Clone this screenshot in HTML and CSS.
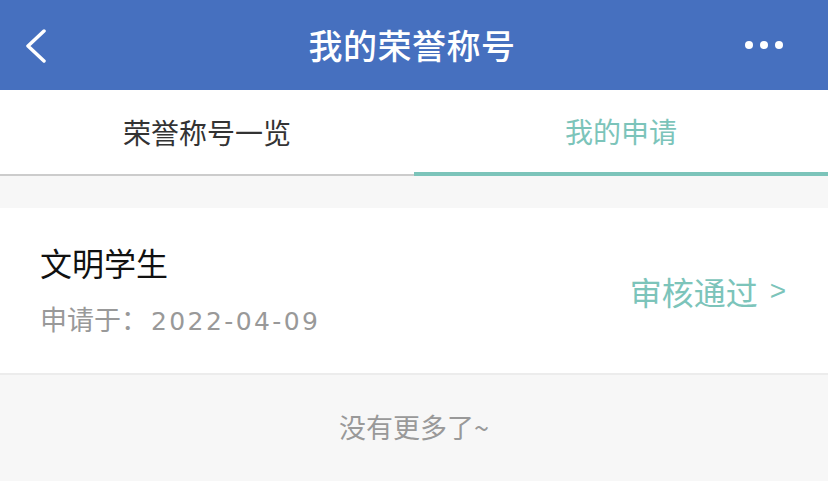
FILE: index.html
```html
<!DOCTYPE html>
<html lang="zh-CN">
<head>
    <meta charset="UTF-8">
    <meta name="viewport" content="width=device-width, initial-scale=1.0">
    <title>我的荣誉称号</title>
    <link rel="stylesheet" href="styles.css">
</head>
<body>
    <div class="app-container">
        <header class="nav-bar">
            <button class="back-button" aria-label="返回">
                <svg width="22" height="34" viewBox="0 0 22 34">
                    <polyline points="19,2 3,17 19,32" fill="none" stroke="#fff" stroke-width="3.5" stroke-linecap="round" stroke-linejoin="round"/>
                </svg>
            </button>
            <h1 class="nav-title">我的荣誉称号</h1>
            <div class="more-button">
                <span class="dot"></span>
                <span class="dot"></span>
                <span class="dot"></span>
            </div>
        </header>

        <nav class="tabs">
            <div class="tab">荣誉称号一览</div>
            <div class="tab active">我的申请</div>
        </nav>

        <div class="list">
            <div class="record">
                <div class="record-info">
                    <div class="record-name">文明学生</div>
                    <div class="record-date">申请于：<span class="date-num">2022-04-09</span></div>
                </div>
                <div class="record-status">审核通过 <span class="arrow">&gt;</span></div>
            </div>
        </div>

        <div class="no-more">没有更多了~</div>
    </div>
</body>
</html>
```

FILE: styles.css
```css
:root {
    --primary-color: #4670bf;
    --accent-color: #7cc4ba;
    --text-dark: #111111;
    --text-tab: #333333;
    --text-muted: #999999;
    --border-color: #ececec;
    --section-bg: #f7f7f7;
    --card-bg: #ffffff;
}

* {
    margin: 0;
    padding: 0;
    box-sizing: border-box;
}

body {
    background-color: var(--section-bg);
    font-family: "Noto Sans CJK SC", "Noto Sans", sans-serif;
    width: 828px;
    height: 481px;
    overflow: hidden;
}

.app-container {
    width: 100%;
}

/* Top bar */
.nav-bar {
    height: 90px;
    background-color: var(--primary-color);
    display: grid;
    grid-template-columns: 1fr auto 1fr;
    align-items: center;
    padding: 0 25px;
}

.back-button {
    width: 22px;
    height: 34px;
    border: none;
    background: transparent;
    display: flex;
    margin-top: 2px;
}

.nav-title {
    font-size: 34px;
    font-weight: 500;
    color: #ffffff;
    line-height: 40px;
    letter-spacing: 0.5px;
    margin-right: 4px;
}

.more-button {
    justify-self: end;
    display: flex;
    gap: 7px;
    margin-right: 20px;
}

.dot {
    width: 8px;
    height: 8px;
    border-radius: 50%;
    background-color: #ffffff;
}

/* Tabs */
.tabs {
    display: grid;
    grid-template-columns: 1fr 1fr;
    background-color: var(--card-bg);
}

.tab {
    height: 86px;
    display: flex;
    align-items: center;
    justify-content: center;
    font-size: 28px;
    color: var(--text-tab);
    border-bottom: 2px solid #cccccc;
}

.tab.active {
    color: var(--accent-color);
    border-bottom: 4px solid var(--accent-color);
}

/* Records */
.list {
    margin-top: 32px;
}

.record {
    height: 167px;
    background-color: var(--card-bg);
    border-bottom: 2px solid var(--border-color);
    display: flex;
    align-items: center;
    justify-content: space-between;
    padding: 0 42px 0 40px;
}

.record-name {
    font-size: 32px;
    line-height: 40px;
    color: var(--text-dark);
}

.record-date {
    font-size: 27px;
    line-height: 34px;
    color: var(--text-muted);
    margin-top: 20px;
}

.date-num {
    font-family: "DejaVu Sans", sans-serif;
    font-size: 25px;
    letter-spacing: 2.4px;
    margin-left: 3px;
}

.record-status {
    font-size: 32px;
    color: var(--accent-color);
    display: flex;
    align-items: center;
    gap: 12px;
}

.arrow {
    font-family: "Liberation Sans", sans-serif;
    font-size: 28px;
}

.no-more {
    text-align: center;
    font-size: 27px;
    line-height: 36px;
    color: var(--text-muted);
    padding-top: 34px;
}
```
